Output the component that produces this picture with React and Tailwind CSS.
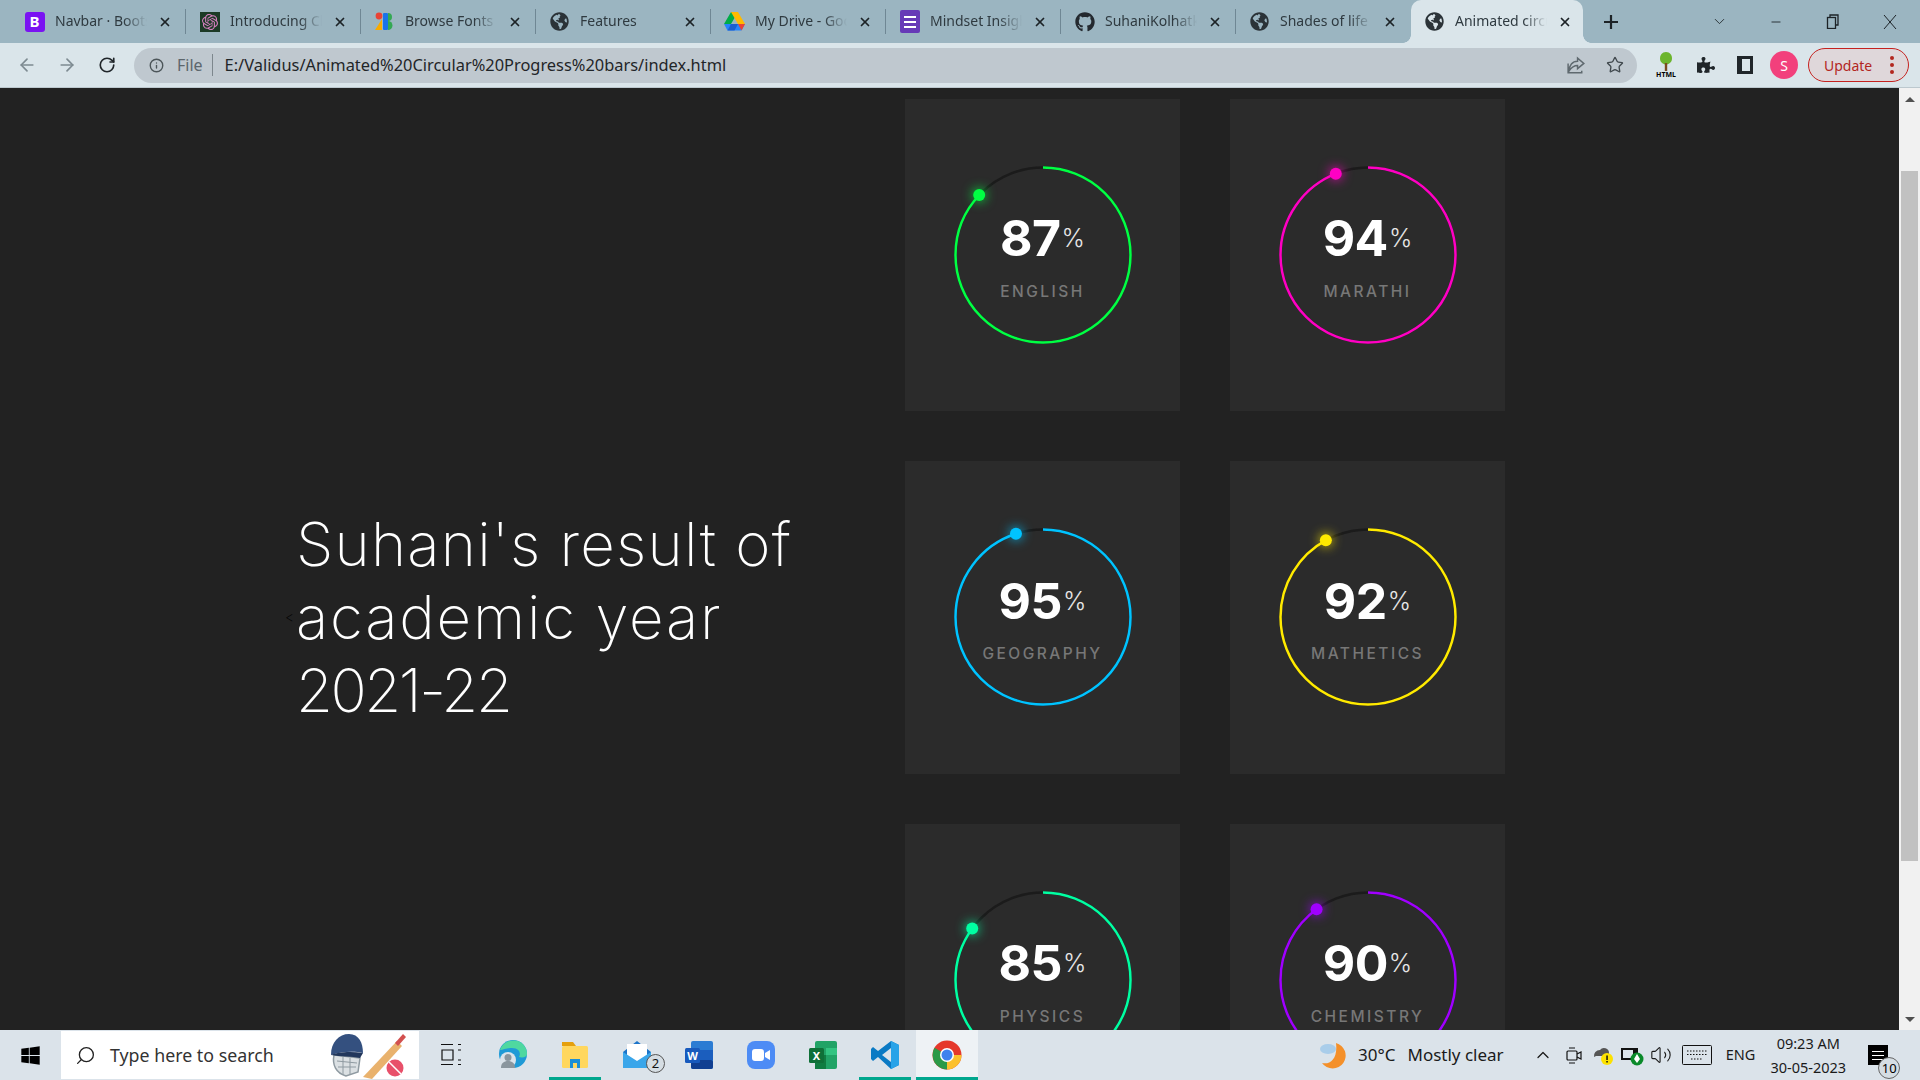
import { X, ArrowLeft, ArrowRight, RotateCw, Info, Star, Search, ChevronDown, ChevronUp, Minus, Volume2 } from "lucide-react";
import { FaGlobeAmericas, FaGithub, FaWindows, FaPuzzlePiece } from "react-icons/fa";
import { SiOpenai } from "react-icons/si";

const segoe = "font-['Noto_Sans','Open_Sans',sans-serif]";

function Globe() {
  return <FaGlobeAmericas className="size-[19px] text-[#2b3338]" />;
}

function BootstrapIcon() {
  return (
    <div className="flex size-5 items-center justify-center rounded-[3px] bg-[#7a12f2] text-[15px] font-bold text-white">B</div>
  );
}

function OpenAiIcon() {
  return (
    <div className="flex size-5 items-center justify-center bg-[#1c3a26]">
      <SiOpenai className="size-4 text-[#d77fc0]" />
    </div>
  );
}

function FontsIcon() {
  return (
    <svg width="20" height="20" viewBox="0 0 20 20">
      <path d="M0 18 L7 7 L7 18Z" fill="#f9ab00" />
      <circle cx="4" cy="4" r="3.4" fill="#ea4335" />
      <rect x="8" y="1" width="5" height="17" rx="1" fill="#1a73e8" />
      <path d="M13 1a4 4 0 010 8z" fill="#34a853" />
      <path d="M13 9a4.5 4.5 0 010 9z" fill="#34a853" />
    </svg>
  );
}

function DriveIcon() {
  return (
    <svg width="21" height="19" viewBox="0 0 21 19">
      <path d="M7 0h7L7 12H0z" fill="#00ac47" />
      <path d="M7 0h7l7 12h-7z" fill="#ffba00" />
      <path d="M0 12h21l-3.500 6.500H3.500z" fill="#2684fc" />
      <path d="M7 12h7l-3.500 6.500H3.500z" fill="#1a5fd0" />
      <path d="M14 12h7l-3.500 6.500z" fill="#ea4335" />
    </svg>
  );
}

function FormsIcon() {
  return (
    <div className="flex h-[23px] w-5 flex-col justify-center gap-[3px] rounded-[2px] bg-[#673ab7] px-1">
      <div className="h-[2px] bg-white" />
      <div className="h-[2px] bg-white" />
      <div className="h-[2px] bg-white" />
    </div>
  );
}

const tabs = [
  { title: "Navbar · Bootstrap", icon: <BootstrapIcon /> },
  { title: "Introducing ChatGPT", icon: <OpenAiIcon /> },
  { title: "Browse Fonts - Google", icon: <FontsIcon /> },
  { title: "Features", icon: <Globe /> },
  { title: "My Drive - Google", icon: <DriveIcon /> },
  { title: "Mindset Insights", icon: <FormsIcon /> },
  { title: "SuhaniKolhatkar", icon: <FaGithub className="size-5 text-[#24292f]" /> },
  { title: "Shades of life", icon: <Globe /> },
  { title: "Animated circular", icon: <Globe />, active: true },
];

function Tab({ tab, last }) {
  return (
    <div className={`relative flex h-full items-center pl-[13px] ${tab.active ? "w-[172px] rounded-t-[10px] bg-[#dae5ea]" : "w-[175px]"}`}>
      {tab.active && (
        <>
          <div className="absolute bottom-0 -left-2 size-2 bg-[radial-gradient(circle_at_0_0,transparent_7.500px,#dae5ea_8px)]" />
          <div className="absolute -right-2 bottom-0 size-2 bg-[radial-gradient(circle_at_100%_0,transparent_7.500px,#dae5ea_8px)]" />
        </>
      )}
      <div className="flex w-[21px] shrink-0 items-center justify-center">{tab.icon}</div>
      <div className="mb-[2px] ml-[10px] w-[92px] overflow-hidden text-[14px] whitespace-nowrap text-[#2f3a40] [mask-image:linear-gradient(to_right,black_75%,transparent)]">
        {tab.title}
      </div>
      <X className="ml-[11px] size-[14px] shrink-0 text-[#1d2327]" strokeWidth={3} />
      {!tab.active && !last && <div className="ml-auto h-[25px] w-px bg-[#6f8794]" />}
    </div>
  );
}

function TitleBar() {
  return (
    <div className="flex h-[43px] shrink-0 items-center bg-[#9bb5c1] pl-[11px]">
      {tabs.map((tab, i) => (
        <Tab key={tab.title} tab={tab} last={i === 7} />
      ))}
      <svg className="ml-5 size-4" viewBox="0 0 16 16">
        <path d="M8 1v14M1 8h14" stroke="#1d2327" strokeWidth="2.200" />
      </svg>
      <ChevronDown className="ml-[92px] size-[17px] text-[#1d2327]" strokeWidth={1.200} />
      <Minus className="ml-[41px] size-[14px] text-[#1d2327]" strokeWidth={1.500} />
      <svg className="ml-[42px] size-[15px]" viewBox="0 0 15 15" fill="none" stroke="#1d2327" strokeWidth="1.300">
        <rect x="2.500" y="3.500" width="8" height="11" />
        <path d="M5 3V1h8v10h-2" />
      </svg>
      <svg className="ml-[43px] size-[14px]" viewBox="0 0 14 14" fill="none" stroke="#1d2327" strokeWidth="1">
        <path d="M1 0l12 14M13 0L1 14" />
      </svg>
    </div>
  );
}

function ToolBar() {
  return (
    <div className="flex h-[45px] shrink-0 items-center border-b border-[#bcc8ce] bg-[#dae5ea]">
      <ArrowLeft className="ml-[17px] size-[20px] text-[#7d8a91]" strokeWidth={2} />
      <ArrowRight className="ml-5 size-[20px] text-[#7d8a91]" strokeWidth={2} />
      <RotateCw className="ml-[21px] size-[18px] text-[#20262a]" strokeWidth={2.200} />
      <div className="ml-[18px] flex h-[35px] w-[1503px] items-center rounded-full bg-[#bfc8cf] pl-[15px]">
        <Info className="size-[15px] text-[#4c5559]" strokeWidth={2.200} />
        <span className="ml-[13px] text-[16px] text-[#5c666c]">File</span>
        <div className="ml-[9px] h-[22px] w-px bg-[#7d878d]" />
        <span className="ml-[12px] text-[16.400px] text-[#1f2528]">E:/Validus/Animated%20Circular%20Progress%20bars/index.html</span>
        <svg className="ml-auto size-[21px]" viewBox="0 0 20 20" fill="none" stroke="#5f696f" strokeWidth="1.400">
          <path d="M11 3l6 5-6 5v-3c-4 0-6 2-8 5 0-5 3-9 8-9zM2 8v9h13v-2" />
        </svg>
        <Star className="mr-[13px] ml-[19px] size-[18px] text-[#41494e]" strokeWidth={1.800} />
      </div>
      <div className="ml-[17px] flex w-[24px] flex-col items-center">
        <svg width="20" height="19" viewBox="0 0 20 19">
          <path d="M10 0c4 0 6 3 6 6.500s-3 6-6 6-6-2.500-6-6S6 0 10 0z" fill="#6cb52d" />
          <rect x="8.800" y="11" width="2.400" height="8" fill="#7b4a1e" />
        </svg>
        <span className="text-[7px] leading-[7px] font-bold text-black">HTML</span>
      </div>
      <FaPuzzlePiece className="ml-[19px] size-[18px] text-[#20262a]" />
      <div className="ml-[22px] h-[18px] w-4 border-[3px] border-l-[5px] border-[#20262a]" />
      <div className="ml-[17px] flex size-7 items-center justify-center rounded-full bg-[#f2407c] text-[14px] text-white">S</div>
      <div className="ml-[10px] flex h-[34px] w-[101px] items-center rounded-full border border-[#c5221f] bg-[#dfd7da] pl-[15px] text-[14px] text-[#b3261e]">
        Update
        <div className="ml-[18px] flex flex-col gap-[3px]">
          <div className="size-1 rounded-full bg-[#b3261e]" />
          <div className="size-1 rounded-full bg-[#b3261e]" />
          <div className="size-1 rounded-full bg-[#b3261e]" />
        </div>
      </div>
    </div>
  );
}

function Ring({ pct, color }) {
  const r = 87.5;
  const c = 2 * Math.PI * r;
  const a = (pct / 100) * 2 * Math.PI;
  const dotX = 88 + r * Math.sin(a);
  const dotY = 88 - r * Math.cos(a);
  return (
    <svg width="176" height="176" viewBox="0 0 176 176" className="overflow-visible [grid-area:1/1]">
      <circle cx="88" cy="88" r={r} fill="none" stroke="#1b1b1b" strokeWidth="2.500" />
      <circle
        cx="88"
        cy="88"
        r={r}
        fill="none"
        stroke={color}
        strokeWidth="2.500"
        strokeDasharray={`${(c * pct) / 100} ${c}`}
        transform="rotate(-90 88 88)"
      />
      <circle cx={dotX} cy={dotY} r="6" fill={color} style={{ filter: `drop-shadow(0 0 6px ${color})` }} />
    </svg>
  );
}

function ScoreCard({ pct, subject, color }) {
  return (
    <div className="flex h-[312.500px] w-[275px] items-center justify-center bg-[#2b2b2b]">
      <div className="grid size-[176px] place-items-center">
        <Ring pct={pct} color={color} />
        <div className="flex flex-col items-center pt-[5.500px] font-['Inter',sans-serif] [grid-area:1/1]">
          <div className="flex items-center text-white">
            <span className="text-[50px] leading-[50px] font-bold tracking-[-0.5px]">{pct}</span>
            <span className="ml-[1px] text-[25px] leading-[50px] font-light text-[#e6e6e6]">%</span>
          </div>
          <div className="mt-[18.500px] text-[15.500px] leading-5 font-medium tracking-[2.500px] text-[#777]">{subject}</div>
        </div>
      </div>
    </div>
  );
}

const scores = [
  { pct: 87, subject: "ENGLISH", color: "#00ff43" },
  { pct: 94, subject: "MARATHI", color: "#ff00c3" },
  { pct: 95, subject: "GEOGRAPHY", color: "#00c3ff" },
  { pct: 92, subject: "MATHETICS", color: "#ffea00" },
  { pct: 85, subject: "PHYSICS", color: "#00ffa2" },
  { pct: 90, subject: "CHEMISTRY", color: "#a000ff" },
];

function Content() {
  return (
    <div className="flex min-h-0 flex-1 overflow-hidden bg-[#222222]">
      <div className="flex min-w-0 flex-1 items-start pt-[10.500px]">
        <div className="flex h-[1037.500px] w-[905px] shrink-0 items-center pl-[296px]">
          <h1 className="relative font-['Inter',sans-serif] text-[60px] leading-[73px] font-extralight text-white">
            <span className="absolute top-[102px] -left-[11px] text-[14px] leading-none text-black">&lt;</span>
            <span className="tracking-[1.200px]">Suhani's result of</span>
            <br />
            <span className="tracking-[1.800px]">academic year</span>
            <br />
            <span className="tracking-[-2.500px]">2021-22</span>
          </h1>
        </div>
        <div className="grid shrink-0 grid-cols-[275px_275px] gap-x-[50px] gap-y-[50px]">
          {scores.map((s) => (
            <ScoreCard key={s.subject} {...s} />
          ))}
        </div>
      </div>
      <div className="flex w-[21px] shrink-0 flex-col items-center bg-[#f1f1f1] pt-[9px] pb-2">
        <div className="size-0 border-x-[5px] border-b-[5px] border-x-transparent border-b-[#505050]" />
        <div className="mt-[69px] h-[690px] w-[17px] bg-[#c1c1c1]" />
        <div className="mt-auto size-0 border-x-[5px] border-t-[5px] border-x-transparent border-t-[#505050]" />
      </div>
    </div>
  );
}

function CricketDoodle() {
  return (
    <svg width="80" height="48" viewBox="0 0 80 48">
      <path d="M5 24c-2 10 2 18 12 21l12-4 2-14z" fill="#dbe0e3" stroke="#8f9aa1" strokeWidth="1.500" />
      <path d="M8 30l20 2M9 36l18 0M14 26v18M21 27v16" stroke="#8f9aa1" strokeWidth="1" />
      <path d="M34 46L68 10l5 5-30 33z" fill="#e9b26d" />
      <path d="M66 12l8-9 3 3-8 9z" fill="#d2504f" />
      <circle cx="66" cy="37" r="8.500" fill="#e8506a" />
      <path d="M60 31l12 12" stroke="#fff" strokeWidth="1.500" />
      <path d="M2 24C2 11 10 3 20 3s14 9 14 19c-8-2-20-2-32 2z" fill="#34507f" />
      <path d="M2 24c6-3 20-4 32-2l-3 5c-8-2-20-1-29-3z" fill="#22375c" />
    </svg>
  );
}

function WordIcon() {
  return (
    <svg width="30" height="30" viewBox="0 0 30 30">
      <rect x="7" y="1" width="22" height="28" rx="2" fill="#2b7cd3" />
      <rect x="7" y="10" width="22" height="10" fill="#1b5ebe" />
      <rect x="7" y="20" width="22" height="9" rx="2" fill="#103f91" />
      <rect x="1" y="8" width="15" height="15" rx="1.500" fill="#185abd" />
      <text x="8.500" y="19.500" textAnchor="middle" fontSize="11" fontWeight="700" fill="#fff" fontFamily="Noto Sans">W</text>
    </svg>
  );
}

function ExcelIcon() {
  return (
    <svg width="30" height="30" viewBox="0 0 30 30">
      <rect x="7" y="1" width="22" height="28" rx="2" fill="#21a366" />
      <rect x="18" y="8" width="11" height="7" fill="#33c481" />
      <rect x="7" y="15" width="11" height="14" fill="#107c41" />
      <rect x="1" y="8" width="15" height="15" rx="1.500" fill="#0f7038" />
      <text x="8.500" y="19.500" textAnchor="middle" fontSize="11" fontWeight="700" fill="#fff" fontFamily="Noto Sans">X</text>
    </svg>
  );
}

function EdgeIcon() {
  return (
    <svg width="30" height="32" viewBox="0 0 30 32">
      <circle cx="15" cy="15" r="14" fill="#1f9ad6" />
      <path d="M2 11C5 3 13 0 20 2c6 2 9 8 9 13 0 3-4 4-8 3 2-3 1-9-7-9-5 0-9 2-12 2z" fill="#4fd8a0" />
      <circle cx="10" cy="21" r="8" fill="#dbe3ea" />
      <circle cx="10" cy="18.500" r="3.500" fill="#8a969e" />
      <path d="M3 29c0-5 3-7 7-7s7 2 7 7z" fill="#8a969e" />
    </svg>
  );
}

function ExplorerIcon() {
  return (
    <svg width="28" height="30" viewBox="0 0 28 30">
      <path d="M1 2h11l3 4H1z" fill="#e5a00d" />
      <rect x="1" y="6" width="26" height="22" rx="1.500" fill="#ffd75e" />
      <path d="M9 28v-9h10v9h-3v-5h-4v5z" fill="#1b8fd6" />
    </svg>
  );
}

function MailIcon() {
  return (
    <div className="relative">
      <svg width="30" height="30" viewBox="0 0 30 30">
        <path d="M1 12L15 1l14 11v16H1z" fill="#1b74c9" />
        <path d="M5 4h20v14l-10 5-10-5z" fill="#fff" />
        <path d="M1 12l14 9 14-9v16H1z" fill="#3aa6ea" />
      </svg>
      <div className="absolute -right-[13px] -bottom-[3px] flex size-[19px] items-center justify-center rounded-full border border-[#555] bg-[#d5dde3] text-[13px] leading-none text-[#111]">2</div>
    </div>
  );
}

function ZoomIcon() {
  return (
    <div className="flex size-[28px] items-center justify-center rounded-[8px] bg-[#4d8cf5]">
      <svg width="18" height="12" viewBox="0 0 18 12">
        <rect width="12" height="12" rx="3" fill="#fff" />
        <path d="M13 4l5-3v10l-5-3z" fill="#fff" />
      </svg>
    </div>
  );
}

function VsCodeIcon() {
  return (
    <svg width="30" height="30" viewBox="0 0 30 30">
      <path d="M21 1l8 4v20l-8 4-13-12-5 4-2-2v-10l2-2 5 4z" fill="#0a7ac4" />
      <path d="M21 8v14l-9-7z" fill="#dbe3ea" />
      <path d="M21 1l8 4v20l-8 4z" fill="#29a3e8" />
    </svg>
  );
}

function ChromeIcon() {
  return (
    <svg width="30" height="32" viewBox="0 0 30 32">
      <circle cx="15" cy="16" r="14.500" fill="#e5382b" />
      <path d="M15 16L2.500 8.800A14.500 14.500 0 0015 30.500z" fill="#2a9a47" />
      <path d="M15 16h14.500A14.500 14.500 0 0115 30.500z" fill="#fbc02d" />
      <circle cx="15" cy="16" r="7" fill="#fff" />
      <circle cx="15" cy="16" r="5.500" fill="#3f82ee" />
    </svg>
  );
}

function TaskIcon({ children, on, active }) {
  return (
    <div className={`relative flex h-full w-[62px] items-center justify-center ${active ? "bg-[#eef2f5]" : ""}`}>
      {children}
      {on && <div className={`absolute bottom-0 h-[3px] bg-[#00a78e] ${active ? "inset-x-0" : "inset-x-[5px]"}`} />}
    </div>
  );
}

function TaskBar() {
  return (
    <div className="flex h-[50px] shrink-0 items-center bg-[#dbe3ea] text-[#1a1a1a]">
      <div className="flex w-[61px] justify-center">
        <FaWindows className="size-[21px] text-black" />
      </div>
      <div className="flex h-[48px] w-[358px] items-center bg-white pl-[14px]">
        <Search className="size-[21px] scale-x-[-1] text-[#222]" strokeWidth={1.500} />
        <span className="ml-[14px] text-[17.800px] text-[#333]">Type here to search</span>
        <div className="mr-[10px] ml-auto">
          <CricketDoodle />
        </div>
      </div>
      <div className="flex h-full pl-[1px]">
        <TaskIcon>
          <svg width="20" height="24" viewBox="0 0 20 24" fill="none" stroke="#111" strokeWidth="1.200">
            <path d="M0 1.500h12M0 21.500h12M1 7h11v10H1zM17 1.500h3M17 7h3M17 17h3M17 21.500h3" />
          </svg>
        </TaskIcon>
        <TaskIcon>
          <EdgeIcon />
        </TaskIcon>
        <TaskIcon on>
          <ExplorerIcon />
        </TaskIcon>
        <TaskIcon>
          <MailIcon />
        </TaskIcon>
        <TaskIcon>
          <WordIcon />
        </TaskIcon>
        <TaskIcon>
          <ZoomIcon />
        </TaskIcon>
        <TaskIcon>
          <ExcelIcon />
        </TaskIcon>
        <TaskIcon on>
          <VsCodeIcon />
        </TaskIcon>
        <TaskIcon on active>
          <ChromeIcon />
        </TaskIcon>
      </div>
      <svg className="ml-[341px] shrink-0" width="28" height="28" viewBox="0 0 28 28">
        <path d="M17 2a13 13 0 11-14 20c8 2 16-4 14-20z" fill="#f4902a" />
        <ellipse cx="9" cy="8" rx="8" ry="5" fill="#a9cdea" />
      </svg>
      <span className="ml-[11px] text-[17px] whitespace-nowrap">30°C</span>
      <span className="ml-[12px] text-[17px] whitespace-nowrap">Mostly clear</span>
      <ChevronUp className="ml-[29px] size-[20px] shrink-0" strokeWidth={1.500} />
      <svg className="ml-[13px] shrink-0" width="16" height="20" viewBox="0 0 16 20" fill="none" stroke="#111" strokeWidth="1.200">
        <rect x="1" y="6" width="10" height="9" rx="1" />
        <path d="M11 9l4-2v7l-4-2M3 3h6M3 18h6" />
      </svg>
      <svg className="ml-[10px] shrink-0" width="22" height="22" viewBox="0 0 22 22">
        <path d="M2 13a6 6 0 016-7 5 5 0 019 3v3H4z" fill="#555" />
        <circle cx="15" cy="15" r="6" fill="#fce100" />
        <rect x="14.300" y="11.500" width="1.500" height="4.500" fill="#111" />
        <rect x="14.300" y="17" width="1.500" height="1.500" fill="#111" />
      </svg>
      <svg className="ml-[6px] shrink-0" width="24" height="22" viewBox="0 0 24 22">
        <rect x="1" y="4" width="17" height="12" fill="#111" />
        <rect x="3" y="6" width="10" height="8" fill="#dbe3ea" />
        <circle cx="17" cy="15" r="6.500" fill="#0a8a2a" />
        <path d="M17 10l3 5-3 4-3-4z" fill="#fff" />
      </svg>
      <Volume2 className="ml-[6px] size-[22px] shrink-0" strokeWidth={1.200} />
      <svg className="ml-[10px] shrink-0" width="30" height="20" viewBox="0 0 30 20" fill="none" stroke="#111">
        <rect x="0.500" y="0.500" width="29" height="19" rx="1" />
        <path d="M5 6h20M5 9.500h20M9 14h12" strokeDasharray="1.500 1.500" />
      </svg>
      <span className="ml-[14px] text-[14.500px]">ENG</span>
      <div className="ml-[11px] flex w-[84px] flex-col items-center text-[14.500px] leading-6 whitespace-nowrap">
        <span>09:23 AM</span>
        <span>30-05-2023</span>
      </div>
      <div className="relative ml-[18px]">
        <div className="flex h-[20px] w-[20px] flex-col justify-center gap-[3px] bg-black px-1">
          <div className="h-px bg-white" />
          <div className="h-px bg-white" />
          <div className="h-px bg-white" />
        </div>
        <div className="absolute -right-[12px] -bottom-[14px] flex size-[22px] items-center justify-center rounded-full border border-[#666] bg-[#d5dde3] text-[13px] leading-none text-black">10</div>
      </div>
    </div>
  );
}

export default function App() {
  return (
    <div className={`flex h-screen w-full flex-col overflow-hidden ${segoe}`}>
      <TitleBar />
      <ToolBar />
      <Content />
      <TaskBar />
    </div>
  );
}
